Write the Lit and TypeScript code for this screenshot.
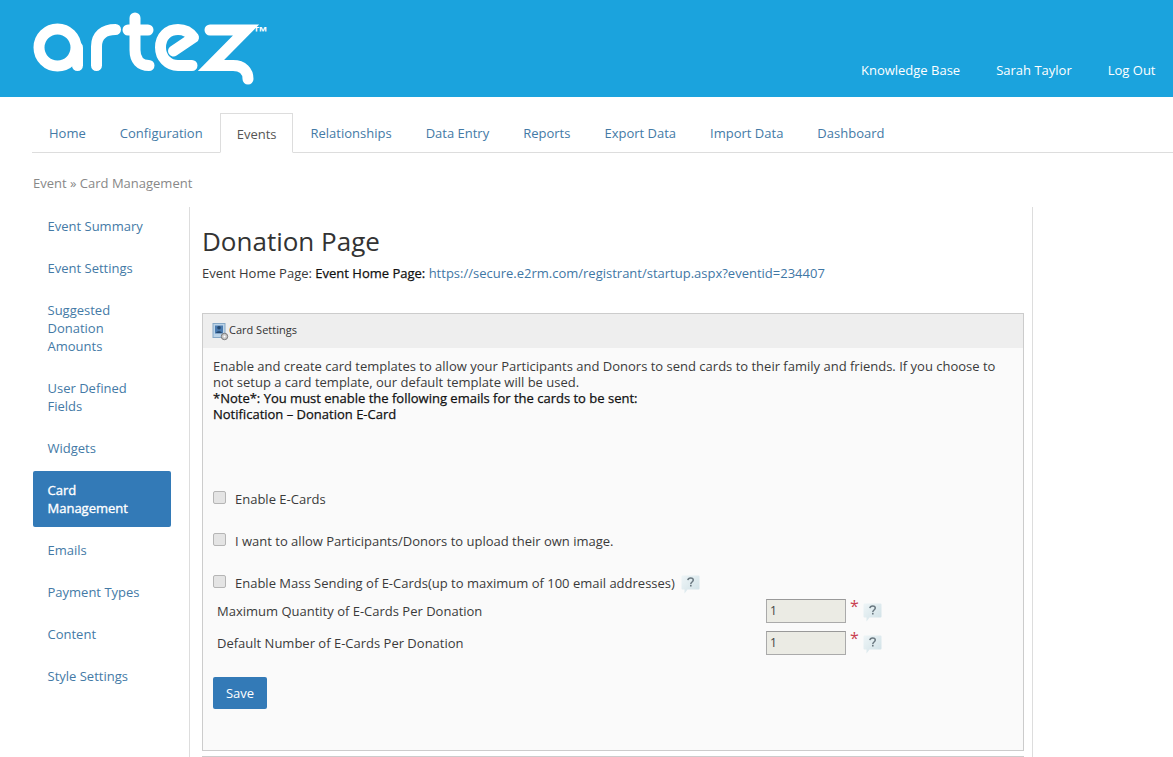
import { LitElement, html, css, svg } from "lit";
import { customElement } from "lit/decorators.js";

const TABS = ["Home", "Configuration", "Events", "Relationships", "Data Entry", "Reports", "Export Data", "Import Data", "Dashboard"];
const SIDE = ["Event Summary", "Event Settings", "Suggested Donation Amounts", "User Defined Fields", "Widgets", "Card Management", "Emails", "Payment Types", "Content", "Style Settings"];

const help = html`<svg class="help" width="19" height="19" viewBox="0 0 19 19">
  <defs><linearGradient id="hb" x1="0" y1="0" x2="1" y2="1"><stop offset="0" stop-color="#eef5f7"/><stop offset="1" stop-color="#cfe0e6"/></linearGradient></defs>
  <path d="M1.500 0.500h16a1 1 0 0 1 1 1v12a1 1 0 0 1-1 1h-11l-3 4v-4h-2a1 1 0 0 1-1-1v-12a1 1 0 0 1 1-1z" fill="url(#hb)"/>
  <path d="M6.800 5.200c.2-1.500 1.400-2.300 2.800-2.300 1.500 0 2.700.9 2.700 2.200 0 1.900-2.500 1.900-2.500 3.900" fill="none" stroke="#6a7880" stroke-width="1.500"/>
  <rect x="9" y="9.800" width="1.600" height="1.700" fill="#6a7880"/>
</svg>`;

const logo = svg`<svg class="logo" width="240" height="97" viewBox="32 0 240 97" fill="none" stroke="#fff" stroke-width="11" stroke-linecap="round" stroke-linejoin="round">
  <circle cx="57.500" cy="47.500" r="18.500"/>
  <path d="M77.500 47.500v18" />
  <path d="M96.500 65.500v-19c0-11 7-17 19-17" />
  <path d="M135 18v32c0 10 5 15.500 14 15.500" />
  <path d="M128 30h20" />
  <path d="M192 65.500h-14c-10 0-17.500-8-17.500-18 0-11 7.500-18 17.500-18 7 0 12 3 15.500 8l-20 13.500" />
  <path d="M210 30h36l-35 35.500h22c10 0 15 6 15 13.500" stroke-linejoin="miter" />
  <text x="253" y="37" font-family="Liberation Sans, sans-serif" font-size="15" font-weight="700" fill="#fff" stroke="none">™</text>
</svg>`;

const cardIcon = html`<svg class="card-icon" width="17" height="18" viewBox="0 0 17 18">
  <rect x="1" y="0.500" width="12" height="14" fill="#bcd4e8" stroke="#86a8c6"/>
  <rect x="3" y="2.500" width="8" height="8" fill="#4a7bb0"/>
  <circle cx="7" cy="4.800" r="1.800" fill="#24486f"/>
  <path d="M4 10c.5-2.500 5.500-2.500 6 0z" fill="#24486f"/>
  <circle cx="12.500" cy="13.500" r="3.200" fill="#c9c9c9" stroke="#777"/>
  <circle cx="12.500" cy="13.500" r="1" fill="#fff"/>
</svg>`;

@customElement("app-root")
export class AppRoot extends LitElement {
  static styles = css`
    :host { display: block; height: 757px; overflow: hidden; background: #fff; color: #3a3a3a; font-family: "Open Sans", sans-serif; font-size: 13px; line-height: 18px; }
    a { color: #3f77a5; text-decoration: none; }
    .header { height: 97px; background: #1ba3dd; display: flex; justify-content: space-between; box-sizing: border-box; padding: 0 17.5px 0 32px; }
    .logo { display: block; }
    .toplinks { display: flex; gap: 36px; padding-top: 61px; }
    .toplinks a { color: #fff; }
    .tabs { display: flex; margin: 16px 0 0 32px; height: 40px; box-sizing: border-box; border-bottom: 1px solid #ddd; }
    .tab { padding: 11px 17px 0; color: #447aa6; }
    .tab.active { color: #555; background: #fff; border: 1px solid #ddd; border-bottom-color: #fff; height: 40px; box-sizing: border-box; padding: 11px 15px 0 16px; margin-right: 1px; }
    .crumbs { margin: 21px 0 0 33px; color: #888; height: 33px; }
    .main { display: flex; align-items: flex-start; margin-left: 33px; }
    .side { width: 138px; display: flex; flex-direction: column; gap: 4px; margin-right: 18px; }
    .side a { padding: 10px 15px 10px 14.5px; color: #447aa6; }
    .side a.active { background: #337ab7; color: #fff; -webkit-text-stroke: 0.35px #fff; border-radius: 2px; }
    .content { height: 550px; border-left: 1px solid #ddd; border-right: 1px solid #ddd; padding: 0 8px 0 12px; width: 822px; }
    h1 { font-size: 26px; font-weight: 400; line-height: 32px; margin: 18px 0 0; color: #333; }
    .sub { margin: 7px 0 0; height: 18px; }
    .sub b { font-weight: 400; color: #111; -webkit-text-stroke: 0.25px #111; }
    .panel { margin-top: 31px; width: 822px; height: 438px; box-sizing: border-box; border: 1px solid #ccc; background: #fafafa; }
    .phead { height: 34px; box-sizing: border-box; padding: 0 0 2px 9px; background: #eee; display: flex; align-items: center; font-size: 11px; color: #333; }
    .card-icon { flex: none; margin-top: 4px; }
    .pbody { padding: 10px 10px 0; line-height: 16px; }
    .note { color: #111; -webkit-text-stroke: 0.25px #111; }
    .check { display: flex; align-items: center; height: 18px; line-height: 18px; }
    .check .box { width: 13px; height: 13px; box-sizing: border-box; margin-right: 9px; background: #e4e4e4; border: 1px solid #b5b5b5; border-radius: 2px; flex: none; position: relative; top: -2px; }
    .check.first { margin-top: 68px; }
    .check.next { margin-top: 24px; }
    .help { flex: none; }
    .check .help { margin-left: 6px; margin-top: 3px; }
    .field { display: flex; align-items: center; margin-left: 4px; height: 24px; line-height: 18px; }
    .field .lbl { width: 549px; }
    .field .inp { width: 80px; height: 24px; box-sizing: border-box; background: #ebebe4; border: 1px solid #aaa; border-top-color: #999; padding-left: 3px; font-size: 12px; line-height: 22px; color: #444; }
    .star { color: #c9404f; font-size: 16px; line-height: 16px; margin: -11px 4px 0 4px; width: 9px; }
    .field .help { margin-top: 3px; }
    .field.a { margin-top: 7px; }
    .field.b { margin-top: 8px; }
    .save { display: block; margin-top: 22px; width: 54px; height: 32px; line-height: 32px; text-align: center; background: #337ab7; color: #fff; border-radius: 2px; }
    .rule { margin-top: 5px; border-top: 1px solid #ccc; width: 822px; }
  `;

  render() {
    return html`
      <div class="header">
        ${logo}
        <div class="toplinks"><a>Knowledge Base</a><a>Sarah Taylor</a><a>Log Out</a></div>
      </div>
      <div class="tabs">
        ${TABS.map((t) => html`<a class="tab ${t === "Events" ? "active" : ""}">${t}</a>`)}
      </div>
      <div class="crumbs">Event » Card Management</div>
      <div class="main">
        <div class="side">
          ${SIDE.map((s) => html`<a class="${s === "Card Management" ? "active" : ""}">${s}</a>`)}
        </div>
        <div class="content">
          <h1>Donation Page</h1>
          <div class="sub">Event Home Page: <b>Event Home Page:</b> <a>https://secure.e2rm.com/registrant/startup.aspx?eventid=234407</a></div>
          <div class="panel">
            <div class="phead">${cardIcon}<span>Card Settings</span></div>
            <div class="pbody">
              <div>Enable and create card templates to allow your Participants and Donors to send cards to their family and friends. If you choose to not setup a card template, our default template will be used.</div>
              <div class="note">*Note*: You must enable the following emails for the cards to be sent:<br />Notification – Donation E-Card</div>
              <div class="check first"><span class="box"></span>Enable E-Cards</div>
              <div class="check next"><span class="box"></span>I want to allow Participants/Donors to upload their own image.</div>
              <div class="check next"><span class="box"></span>Enable Mass Sending of E-Cards(up to maximum of 100 email addresses) ${help}</div>
              <div class="field a"><span class="lbl">Maximum Quantity of E-Cards Per Donation</span><span class="inp">1</span><span class="star">*</span>${help}</div>
              <div class="field b"><span class="lbl">Default Number of E-Cards Per Donation</span><span class="inp">1</span><span class="star">*</span>${help}</div>
              <a class="save">Save</a>
            </div>
          </div>
          <div class="rule"></div>
        </div>
      </div>
    `;
  }
}
